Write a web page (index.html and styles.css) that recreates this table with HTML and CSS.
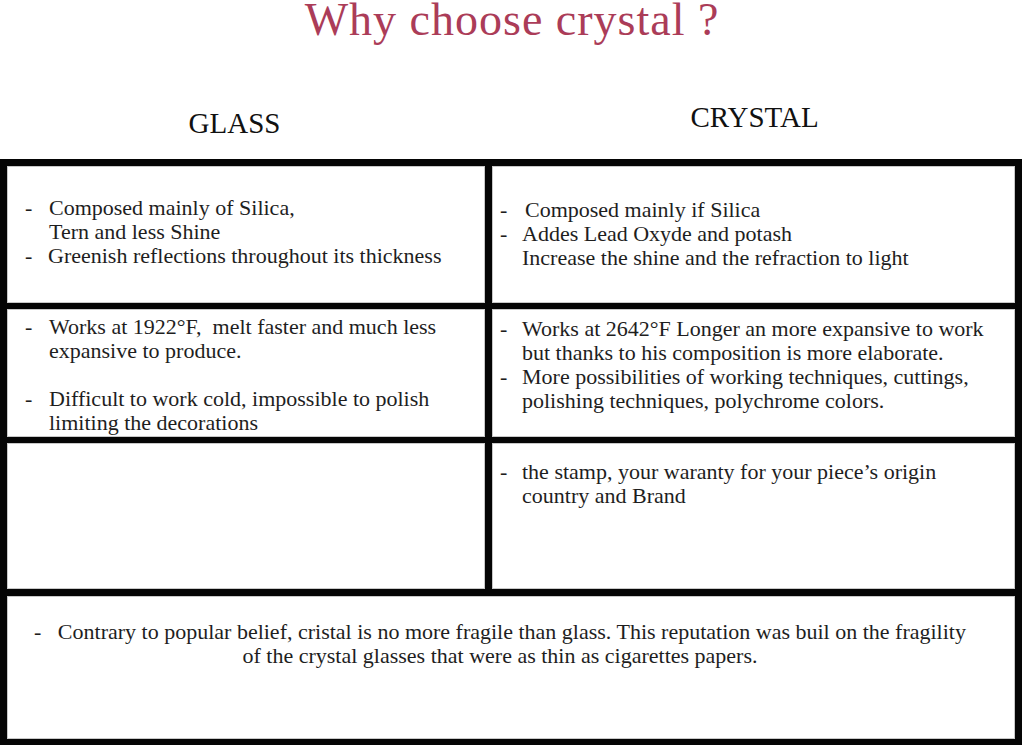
FILE: index.html
```html
<!DOCTYPE html>
<html lang="en">
<head>
<meta charset="utf-8">
<title>Why choose crystal ?</title>
<link rel="stylesheet" href="styles.css">
</head>
<body>
  <h1 class="title">Why choose crystal ?</h1>
  <div class="heads">
    <h2 class="head head-glass">GLASS</h2>
    <h2 class="head head-crystal">CRYSTAL</h2>
  </div>
  <div class="table">
    <div class="cell left r1">
      <div class="item"><span class="dash">-</span><span>Composed mainly of Silica,<br>Tern and less Shine</span></div>
      <div class="item"><span class="dash">-</span><span class="nudge-l">Greenish reflections throughout its thickness</span></div>
    </div>
    <div class="cell right r1r">
      <div class="item"><span class="dash">-</span><span class="nudge-r">Composed mainly if Silica</span></div>
      <div class="item"><span class="dash">-</span><span>Addes Lead Oxyde and potash<br>Increase the shine and the refraction to light</span></div>
    </div>
    <div class="cell left r2">
      <div class="item"><span class="dash">-</span><span>Works at 1922°F,&nbsp; melt faster and much less<br>expansive to produce.</span></div>
      <div class="item spaced"><span class="dash">-</span><span>Difficult to work cold, impossible to polish<br>limiting the decorations</span></div>
    </div>
    <div class="cell right r2r">
      <div class="item"><span class="dash">-</span><span>Works at 2642°F Longer an more expansive to work<br>but thanks to his composition is more elaborate.</span></div>
      <div class="item"><span class="dash">-</span><span>More possibilities of working techniques, cuttings,<br>polishing techniques, polychrome colors.</span></div>
    </div>
    <div class="cell left r3"></div>
    <div class="cell right r3r">
      <div class="item"><span class="dash">-</span><span>the stamp, your waranty for your piece’s origin<br>country and Brand</span></div>
    </div>
    <div class="cell full r4">
      <p class="note">-&nbsp;&nbsp; Contrary to popular belief, cristal is no more fragile than glass. This reputation was buil on the fragility<br>of the crystal glasses that were as thin as cigarettes papers.</p>
    </div>
  </div>
</body>
</html>
```

FILE: styles.css
```css
html, body {
  margin: 0;
  padding: 0;
  background: #ffffff;
}

body {
  width: 1024px;
  height: 748px;
  overflow: hidden;
  font-family: "Liberation Serif", "Times New Roman", serif;
  color: #1e1e1e;
}

.title {
  margin: 0;
  font-family: "Liberation Serif", serif;
  font-weight: normal;
  font-size: 46px;
  line-height: 40px;
  letter-spacing: 1px;
  color: #ab3c58;
  text-align: center;
}

.heads {
  display: grid;
  grid-template-columns: 485px 1fr;
  margin-top: 62px;
  height: 36px;
  margin-bottom: 21px;
}

.head {
  margin: 0;
  font-weight: normal;
  font-size: 29px;
  line-height: 30px;
  text-align: center;
  color: #111;
}

.head-glass {
  padding-top: 6px;
  padding-right: 16px;
}

.table {
  width: 1022px;
  box-sizing: border-box;
  background: #050505;
  padding: 7px 7px 6px 7px;
  display: grid;
  grid-template-columns: 478px 523px;
  grid-template-rows: 137px 128px 147px 143px;
  column-gap: 7px;
  row-gap: 6px;
}

.table .r3,
.table .r3r { margin-bottom: 1px; }

.cell {
  background: #fff;
  box-shadow: inset 0 0 0 1px #c8c8c8;
  font-size: 22px;
  line-height: 24px;
  box-sizing: border-box;
}

.full {
  grid-column: 1 / 3;
}

.item {
  display: flex;
}

.left {
  padding-left: 18px;
}

.left .dash {
  width: 24px;
  flex: none;
}

.right {
  padding-left: 8px;
}

.right .dash {
  width: 22px;
  flex: none;
}

.nudge-r { margin-left: 3px; }
.nudge-l { margin-left: -1px; }

.r1 { padding-top: 30px; }
.r1r { padding-top: 32px; }
.r2 { padding-top: 6px; }
.r2r { padding-top: 8px; }
.r3r { padding-top: 17px; }
.r4 { padding-top: 24px; padding-right: 22px; }

.spaced { margin-top: 24px; }

.note {
  margin: 0;
  text-align: center;
}
```
